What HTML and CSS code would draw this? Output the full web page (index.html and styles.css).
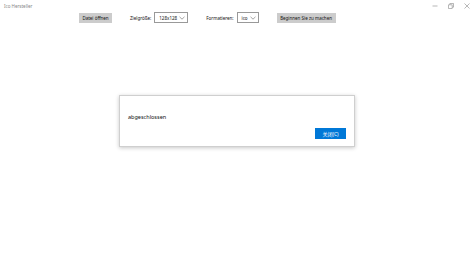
FILE: index.html
```html
<!DOCTYPE html>
<html lang="de">
<head>
    <meta charset="UTF-8">
    <title>Ico Hersteller</title>
    <link rel="stylesheet" href="styles.css">
</head>
<body>
    <div class="titlebar">
        <span class="app-title">Ico Hersteller</span>
        <div class="window-controls">
            <span class="ctrl">
                <svg width="6" height="6" viewBox="0 0 6 6"><path d="M0.5 3h5" stroke="#888" stroke-width="0.6"/></svg>
            </span>
            <span class="ctrl">
                <svg width="6" height="6" viewBox="0 0 6 6"><path d="M0.5 1.8h3.7v3.7h-3.7z M1.8 1.8v-1.3h3.7v3.7h-1.3" fill="none" stroke="#888" stroke-width="0.6"/></svg>
            </span>
            <span class="ctrl">
                <svg width="6" height="6" viewBox="0 0 6 6"><path d="M0.5 0.5l5 5M5.5 0.5l-5 5" stroke="#888" stroke-width="0.6"/></svg>
            </span>
        </div>
    </div>

    <div class="toolbar">
        <button class="btn open-btn">Datei öffnen</button>
        <label class="field-label">Zielgröße:</label>
        <div class="select size-select">
            <span>128x128</span>
            <svg class="chevron" width="6" height="4" viewBox="0 0 6 4"><path d="M0.5 0.8l2.5 2.4l2.5-2.4" fill="none" stroke="#666" stroke-width="0.6"/></svg>
        </div>
        <label class="field-label">Formatieren:</label>
        <div class="select format-select">
            <span>ico</span>
            <svg class="chevron" width="6" height="4" viewBox="0 0 6 4"><path d="M0.5 0.8l2.5 2.4l2.5-2.4" fill="none" stroke="#666" stroke-width="0.6"/></svg>
        </div>
        <button class="btn start-btn">Beginnen Sie zu machen</button>
    </div>

    <div class="dialog">
        <div class="dialog-message">abgeschlossen</div>
        <div class="dialog-actions">
            <button class="btn-primary">关闭(C)</button>
        </div>
    </div>
</body>
</html>
```

FILE: styles.css
```css
* {
    margin: 0;
    padding: 0;
    box-sizing: border-box;
}

body {
    font-family: 'Noto Sans', 'Noto Sans CJK SC', sans-serif;
    background: #fff;
    color: #111;
    width: 475px;
    height: 253px;
    overflow: hidden;
}

.titlebar {
    height: 11px;
    display: flex;
    align-items: center;
    justify-content: space-between;
    padding-left: 4px;
}

.app-title {
    font-size: 4.5px;
    color: #888;
}

.window-controls {
    display: flex;
    height: 11px;
}

.ctrl {
    width: 16px;
    display: flex;
    align-items: center;
    justify-content: center;
}

.toolbar {
    display: flex;
    align-items: center;
    padding-left: 79px;
    margin-top: 1px;
    height: 11px;
}

.btn {
    background: #cccccc;
    border: none;
    height: 10px;
    padding: 0;
    font-family: inherit;
    font-size: 4.5px;
    color: #111;
    text-align: center;
}

.open-btn {
    width: 33px;
}

.start-btn {
    width: 59px;
    margin-left: 18px;
}

.field-label {
    font-size: 4.5px;
    margin-left: 18px;
    margin-right: 3px;
}

.select {
    display: flex;
    align-items: center;
    justify-content: space-between;
    height: 11px;
    border: 1px solid #999;
    padding: 0 2px 0 4px;
    font-size: 4.5px;
}

.size-select {
    width: 34px;
}

.format-select {
    width: 22px;
}

.chevron {
    display: block;
}

.dialog {
    position: absolute;
    left: 119px;
    top: 95px;
    width: 236px;
    height: 52px;
    background: #fff;
    border: 1px solid #cfcfcf;
    box-shadow: 0 1px 4px rgba(0, 0, 0, 0.22);
    padding: 17px 8px 0 8px;
}

.dialog-message {
    font-size: 5.5px;
    height: 15px;
}

.dialog-actions {
    display: flex;
    justify-content: flex-end;
}

.btn-primary {
    background: #0078d7;
    color: #fff;
    border: none;
    width: 31px;
    height: 11px;
    font-family: inherit;
    font-size: 5px;
}
```
